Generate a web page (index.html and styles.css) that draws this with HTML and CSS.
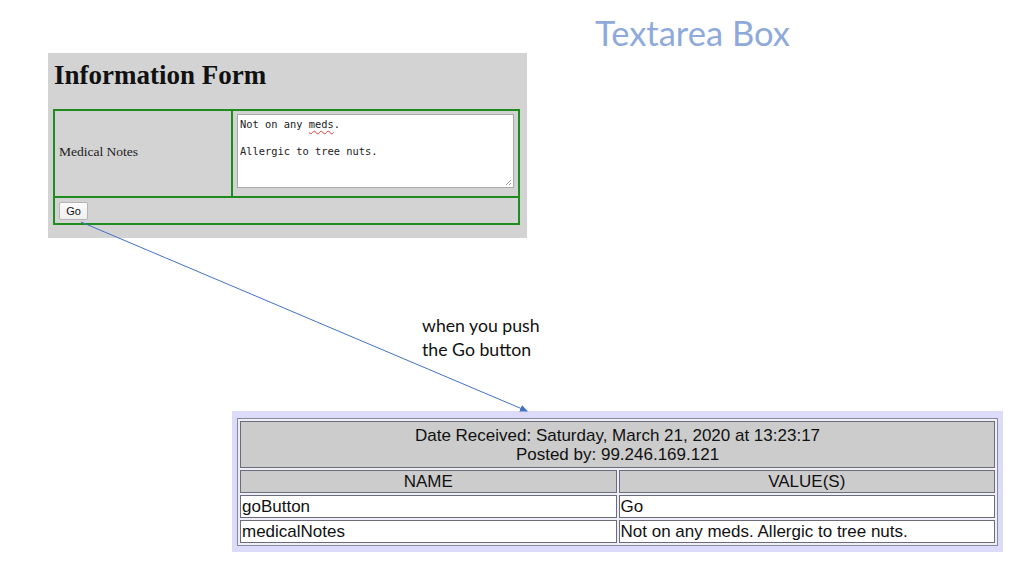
FILE: index.html
```html
<!DOCTYPE html>
<html>
<head>
<meta charset="utf-8">
<link rel="stylesheet" href="styles.css">
</head>
<body>
<div class="slide">
  <h2 class="slide-title">Textarea Box</h2>

  <div class="form-shot">
    <h1 class="form-title">Information Form</h1>
    <div class="ftable">
      <div class="fcell flabel">Medical Notes</div>
      <div class="fcell finput">
        <div class="textarea">Not on any <span class="misspelt">meds</span>.<br><br>Allergic to tree nuts.
          <svg class="grip" width="8" height="8" viewBox="0 0 8 8"><path d="M7 2 L2 7 M7 5 L5 7" stroke="#9a9a9a" stroke-width="1"/></svg>
        </div>
      </div>
      <div class="fcell fbutton"><span class="gobtn">Go</span></div>
    </div>
  </div>

  <p class="note">when you push<br>the Go button</p>

  <div class="result-shot">
    <table class="rtable">
      <tr><td colspan="2" class="hdr">Date Received: Saturday, March 21, 2020 at 13:23:17<br>Posted by: 99.246.169.121</td></tr>
      <tr><td class="hdr col">NAME</td><td class="hdr col">VALUE(S)</td></tr>
      <tr><td>goButton</td><td>Go</td></tr>
      <tr><td>medicalNotes</td><td>Not on any meds. Allergic to tree nuts.</td></tr>
    </table>
  </div>

  <svg class="arrow" width="1024" height="576" viewBox="0 0 1024 576">
    <defs>
      <marker id="ah" markerWidth="8" markerHeight="8" refX="7" refY="4" orient="auto" markerUnits="userSpaceOnUse">
        <path d="M0 0.5 L8 4 L0 7.5 Z" fill="#4472c4"/>
      </marker>
    </defs>
    <line x1="81" y1="222" x2="527" y2="411" stroke="#4472c4" stroke-width="1" marker-end="url(#ah)"/>
  </svg>
</div>
</body>
</html>
```

FILE: styles.css
```css
html, body {
  margin: 0;
  padding: 0;
  background: #ffffff;
}

.slide {
  position: relative;
  width: 1024px;
  height: 576px;
  overflow: hidden;
  background: #ffffff;
}

.slide-title {
  position: absolute;
  left: 595px;
  top: 10px;
  margin: 0;
  font-family: Lato, "Open Sans", sans-serif;
  font-weight: 400;
  font-size: 34.5px;
  line-height: 46px;
  color: #8eaadb;
}

.form-shot {
  position: absolute;
  left: 48px;
  top: 53px;
  width: 479px;
  height: 185px;
  box-sizing: border-box;
  padding: 6px 0 0 5px;
  background: #d3d3d3;
}

.form-title {
  margin: 0 0 18px 1px;
  font-family: "Liberation Serif", "Times New Roman", serif;
  font-weight: 700;
  font-size: 27px;
  line-height: 32px;
  color: #111;
}

.ftable {
  width: 467px;
  box-sizing: border-box;
  border: 2px solid #1e8c1e;
  display: grid;
  grid-template-columns: 178px 1fr;
}

.fcell {
  box-sizing: border-box;
}

.flabel {
  border-right: 2px solid #1e8c1e;
  height: 85px;
  display: flex;
  align-items: center;
  padding-left: 4px;
  padding-bottom: 3px;
  font-family: "Liberation Serif", "Times New Roman", serif;
  font-size: 13.5px;
  color: #222;
}

.finput {
  padding: 3px 4px 8px 4px;
}

.textarea {
  position: relative;
  height: 74px;
  box-sizing: border-box;
  background: #fff;
  border: 1px solid #a9a9a9;
  padding: 3px 2px;
  font-family: "DejaVu Sans Mono", "Liberation Mono", monospace;
  font-size: 10.4px;
  line-height: 13.5px;
  color: #222;
}

.misspelt {
  text-decoration: underline wavy #e04040;
  text-decoration-thickness: 1px;
  text-underline-offset: 2px;
}

.grip {
  position: absolute;
  right: 1px;
  bottom: 1px;
}

.fbutton {
  grid-column: 1 / 3;
  border-top: 2px solid #1e8c1e;
  height: 27px;
  padding: 3px 0 0 4px;
}

.gobtn {
  display: inline-flex;
  align-items: center;
  justify-content: center;
  width: 29px;
  height: 18px;
  box-sizing: border-box;
  background: linear-gradient(#fbfbfb, #efefef);
  border: 1px solid #b4b4b4;
  border-radius: 2px;
  font-family: "Liberation Sans", Arial, sans-serif;
  font-size: 11px;
  color: #111;
}

.note {
  position: absolute;
  left: 422px;
  top: 314px;
  margin: 0;
  font-family: Lato, "Open Sans", sans-serif;
  font-size: 17.7px;
  line-height: 23.5px;
  color: #111;
}

.result-shot {
  position: absolute;
  left: 232px;
  top: 411px;
  width: 771px;
  height: 141px;
  box-sizing: border-box;
  padding: 7px 0 0 5px;
  background: #dcdcfa;
}

.rtable {
  width: 761px;
  border: 1px solid #8a8a98;
  border-spacing: 2px;
  background: #eeeef8;
  font-family: "Liberation Sans", Arial, sans-serif;
  font-size: 17px;
  line-height: 17px;
  color: #111;
  table-layout: fixed;
}

.rtable td {
  border: 1px solid #6c6c7a;
  background: #ffffff;
  padding: 2px 1px 2px 1px;
  width: 50%;
  height: 17px;
}

.rtable td.hdr {
  background: #cccccc;
  text-align: center;
  padding: 4px 1px 3px 1px;
  line-height: 19px;
}

.rtable td.col {
  padding: 2px 1px 2px 1px;
  line-height: 17px;
}

.arrow {
  position: absolute;
  left: 0;
  top: 0;
  pointer-events: none;
}
```
